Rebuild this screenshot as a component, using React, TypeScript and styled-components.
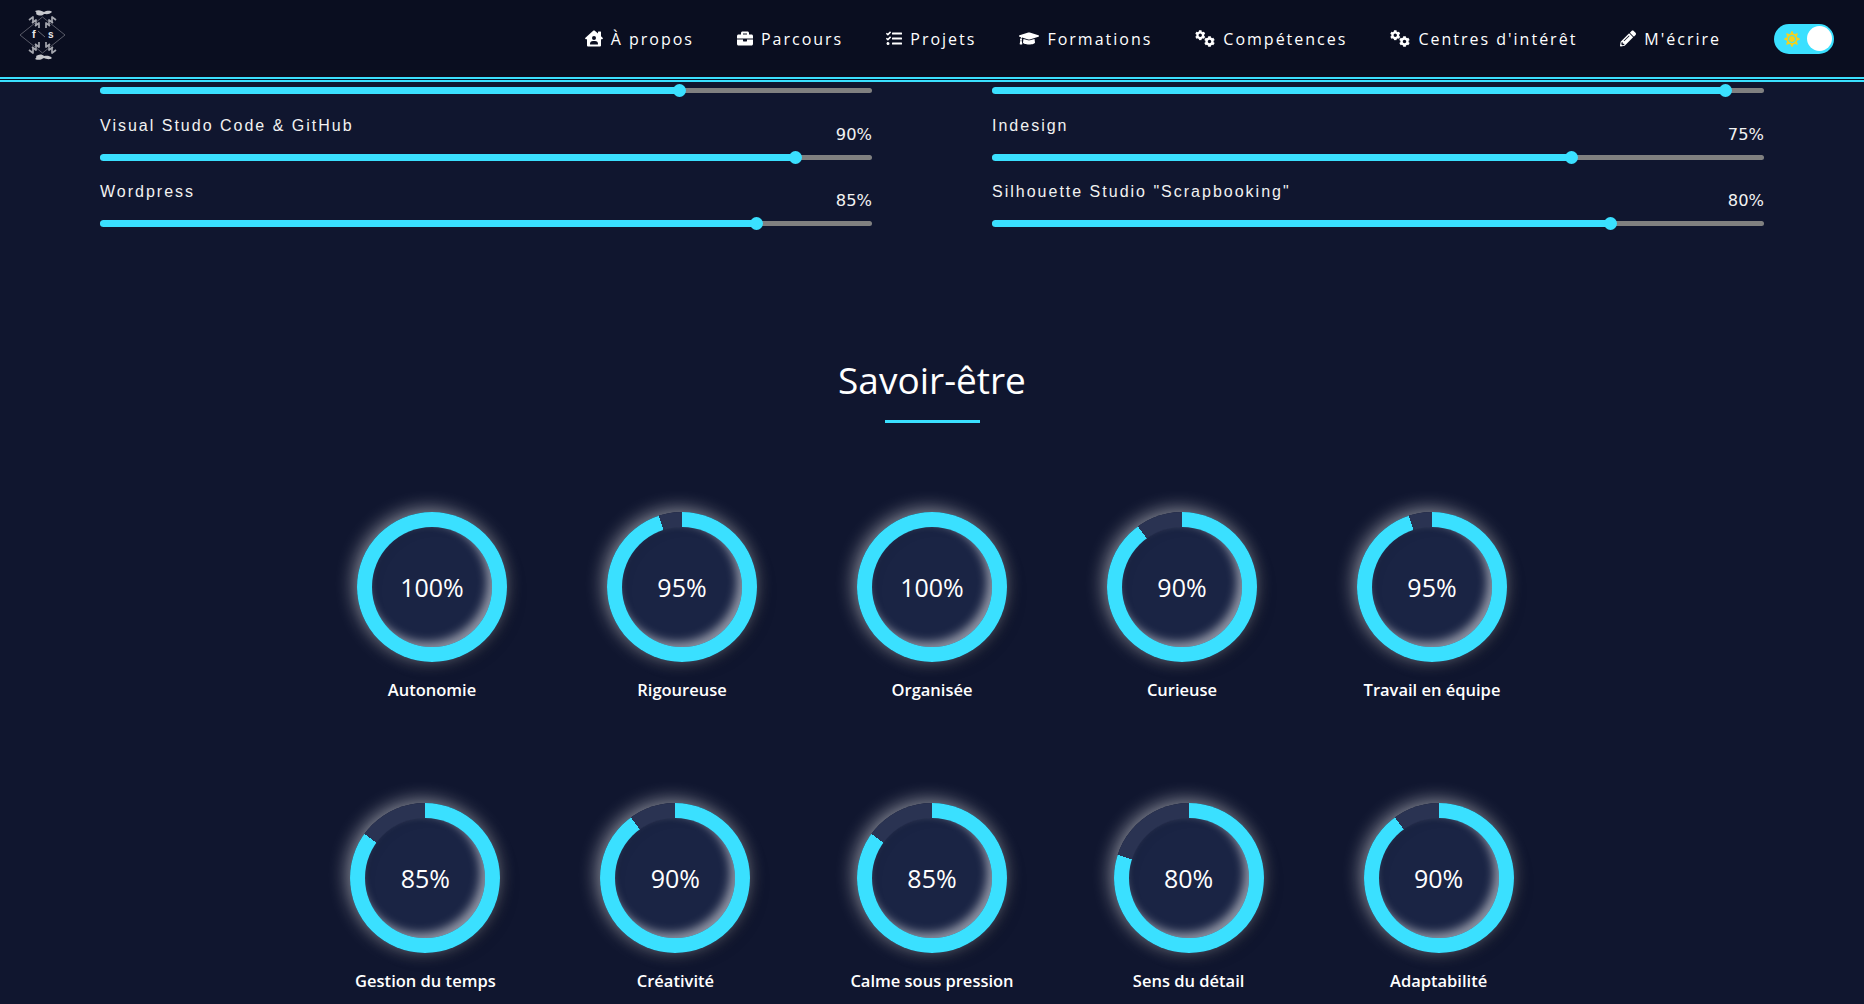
import React from "react";
import styled, { createGlobalStyle } from "styled-components";
import { FaHouseUser, FaBriefcase, FaTasks, FaGraduationCap, FaCog, FaPencilAlt, FaSun } from "react-icons/fa";

const CYAN = "#3ae0ff";

const Global = createGlobalStyle`
  html, body { margin: 0; padding: 0; height: 1004px; overflow: hidden; background: #10162f; }
  body { font-family: "Open Sans", "Liberation Sans", sans-serif; color: #fff; }
  * { box-sizing: border-box; }
`;

const Header = styled.header`
  height: 82px;
  display: flex;
  align-items: center;
  justify-content: space-between;
  padding: 0 30px 0 20px;
  background: #0a0e20;
  border-bottom: 5px double ${CYAN};
`;

const LogoBox = styled.div`
  width: 46px;
  height: 70px;
  align-self: flex-start;
  display: flex;
`;

const Right = styled.div`
  display: flex;
  align-items: center;
`;

const Nav = styled.nav`
  display: flex;
  align-items: center;
  gap: 43px;
  margin-right: 53px;
`;

const NavLink = styled.a<{ $icon: number }>`
  display: flex;
  align-items: center;
  gap: 8px;
  font-size: 16px;
  letter-spacing: 2px;
  color: #fff;
  white-space: nowrap;
  > svg { width: ${(p) => p.$icon}px; height: 17px; flex: none; }
`;

const Toggle = styled.div`
  width: 60px;
  height: 30px;
  border-radius: 15px;
  background: ${CYAN};
  display: flex;
  align-items: center;
  justify-content: space-between;
  padding: 0 2px 0 10px;
  svg { color: #f6d21c; font-size: 16px; }
`;

const Knob = styled.span`
  width: 25px;
  height: 25px;
  border-radius: 50%;
  background: #fff;
`;

const Skills = styled.section`
  display: grid;
  grid-template-columns: 772px 772px;
  column-gap: 120px;
  padding: 5px 100px 0;
`;

const SkillColumn = styled.div`
  display: flex;
  flex-direction: column;
`;

const SkillRow = styled.div`
  height: 66.5px;
  display: flex;
  flex-direction: column;
  justify-content: flex-end;
  &:first-child { height: 7px; }
`;

const SkillHead = styled.div`
  height: 46px;
  display: flex;
  justify-content: space-between;
`;

const SkillName = styled.span`
  font-family: "Liberation Sans", Arial, sans-serif;
  font-size: 16px;
  line-height: 18px;
  letter-spacing: 2px;
  margin-top: 9px;
  color: #f2f2f2;
`;

const SkillValue = styled.span`
  font-family: "DejaVu Sans", sans-serif;
  font-size: 16.25px;
  line-height: 20px;
  margin-top: 17px;
  color: #f2f2f2;
`;

const Track = styled.div`
  position: relative;
  height: 7px;
  display: flex;
  align-items: center;
`;

const TrackLine = styled.div`
  flex: 1;
  height: 5px;
  border-radius: 3px;
  background: #808080;
`;

const Fill = styled.div`
  position: absolute;
  left: 0;
  top: 0;
  height: 7px;
  border-radius: 4px;
  background: ${CYAN};
  &::after {
    content: "";
    position: absolute;
    right: -7px;
    top: -3px;
    width: 13px;
    height: 13px;
    border-radius: 50%;
    background: ${CYAN};
  }
`;

const Title = styled.h2`
  margin: 128px 0 0;
  text-align: center;
  font-size: 37px;
  font-weight: 400;
  line-height: 49px;
  color: #fff;
`;

const Underline = styled.div`
  width: 95px;
  height: 3px;
  margin: 16px auto 0;
  background: ${CYAN};
`;

const CircleRow = styled.div<{ $top: number }>`
  display: flex;
  justify-content: center;
  gap: 100px;
  margin-top: ${(p) => p.$top}px;
`;

const CircleItem = styled.div`
  min-width: 150px;
  display: flex;
  flex-direction: column;
  align-items: center;
`;

const Ring = styled.div`
  width: 150px;
  height: 150px;
  border-radius: 50%;
  display: flex;
  align-items: center;
  justify-content: center;
  box-shadow: -3px -3px 18px rgba(255, 255, 255, 0.5), 5px 5px 15px rgba(0, 0, 0, 0.22);
`;

const Inner = styled.div`
  width: 120px;
  height: 120px;
  border-radius: 50%;
  background: #1a2444;
  display: flex;
  align-items: center;
  justify-content: center;
  font-size: 25px;
  font-weight: 500;
  color: #fff;
  box-shadow: inset -5px -5px 10px rgba(255, 255, 255, 0.5), inset 4px 4px 10px rgba(0, 0, 0, 0.04);
`;

const CircleLabel = styled.div`
  margin-top: 17px;
  font-size: 16.5px;
  font-weight: 600;
  line-height: 22px;
  color: #fff;
  white-space: nowrap;
`;

const Chevron = ({ d }: { d: string }) => (
  <path d={d} fill="none" stroke="#a4a6ae" strokeWidth="1.7" strokeLinejoin="round" />
);

const Sprig = ({ flip }: { flip?: boolean }) => (
  <g transform={flip ? "translate(0 70) scale(1 -1)" : undefined}>
    <path d="M15 11 C19 9 22 11 24 12 C26 11 30 10 32 12 C29 15 26 14 24 14 C22 16 19 16 16 14 C17 13 16 12 15 11 Z" fill="#c6c7cc" />
    <Chevron d="M9 20 L13 17 L13 22" />
    <Chevron d="M12 23 L16 20 L16 25" />
    <Chevron d="M15 26 L19 23 L19 28" />
    <Chevron d="M36 20 L32 17 L32 22" />
    <Chevron d="M33 23 L29 20 L29 25" />
    <Chevron d="M30 26 L26 23 L26 28" />
  </g>
);

const Logo = () => (
  <svg viewBox="0 0 46 70" width="46" height="70">
    <Sprig />
    <Sprig flip />
    <path d="M22.5 17 L45 35 L22.5 53 L0 35 Z" fill="none" stroke="#6d6f7a" strokeWidth=".8" />
    <path d="M18 31 L25 37" stroke="#8d8f98" strokeWidth=".7" />
    <text x="12" y="38" fontFamily="Liberation Sans, sans-serif" fontWeight="700" fontSize="11" fill="#e6e6e8">f</text>
    <text x="28" y="38" fontFamily="Liberation Sans, sans-serif" fontWeight="700" fontSize="10" fill="#e6e6e8">s</text>
  </svg>
);

const Gears = () => (
  <svg viewBox="0 0 20 17" fill="currentColor">
    <FaCog x={0} y={0} size={10.5} />
    <FaCog x={9} y={6} size={11} />
  </svg>
);

const links: [React.ReactNode, string, number][] = [
  [<FaHouseUser />, "À propos", 18],
  [<FaBriefcase />, "Parcours", 16],
  [<FaTasks />, "Projets", 16],
  [<FaGraduationCap />, "Formations", 20],
  [<Gears />, "Compétences", 20],
  [<Gears />, "Centres d'intérêt", 20],
  [<FaPencilAlt />, "M'écrire", 16],
];

const skills: [string, number][][] = [
  [["", 75], ["Visual Studo Code & GitHub", 90], ["Wordpress", 85]],
  [["", 95], ["Indesign", 75], ['Silhouette Studio "Scrapbooking"', 80]],
];

const rowOne: [string, number][] = [
  ["Autonomie", 100],
  ["Rigoureuse", 95],
  ["Organisée", 100],
  ["Curieuse", 90],
  ["Travail en équipe", 95],
];

const rowTwo: [string, number][] = [
  ["Gestion du temps", 85],
  ["Créativité", 90],
  ["Calme sous pression", 85],
  ["Sens du détail", 80],
  ["Adaptabilité", 90],
];

const renderCircle = ([name, v]: [string, number]) => (
  <CircleItem key={name}>
    <Ring style={{ background: `conic-gradient(${CYAN} 0 ${v * 3.6}deg, #2a3352 ${v * 3.6}deg 360deg)` }}>
      <Inner>{v}%</Inner>
    </Ring>
    <CircleLabel>{name}</CircleLabel>
  </CircleItem>
);

export default function App() {
  return (
    <>
      <Global />
      <Header>
        <LogoBox>
          <Logo />
        </LogoBox>
        <Right>
          <Nav>
            {links.map(([icon, text, w]) => (
              <NavLink key={text} $icon={w}>
                {icon}
                {text}
              </NavLink>
            ))}
          </Nav>
          <Toggle>
            <FaSun />
            <Knob />
          </Toggle>
        </Right>
      </Header>
      <Skills>
        {skills.map((col, i) => (
          <SkillColumn key={i}>
            {col.map(([name, v]) => (
              <SkillRow key={name + v}>
                {name && (
                  <SkillHead>
                    <SkillName>{name}</SkillName>
                    <SkillValue>{v}%</SkillValue>
                  </SkillHead>
                )}
                <Track>
                  <TrackLine />
                  <Fill style={{ width: `${v}%` }} />
                </Track>
              </SkillRow>
            ))}
          </SkillColumn>
        ))}
      </Skills>
      <Title>Savoir-être</Title>
      <Underline />
      <CircleRow $top={89}>{rowOne.map(renderCircle)}</CircleRow>
      <CircleRow $top={102}>{rowTwo.map(renderCircle)}</CircleRow>
    </>
  );
}
